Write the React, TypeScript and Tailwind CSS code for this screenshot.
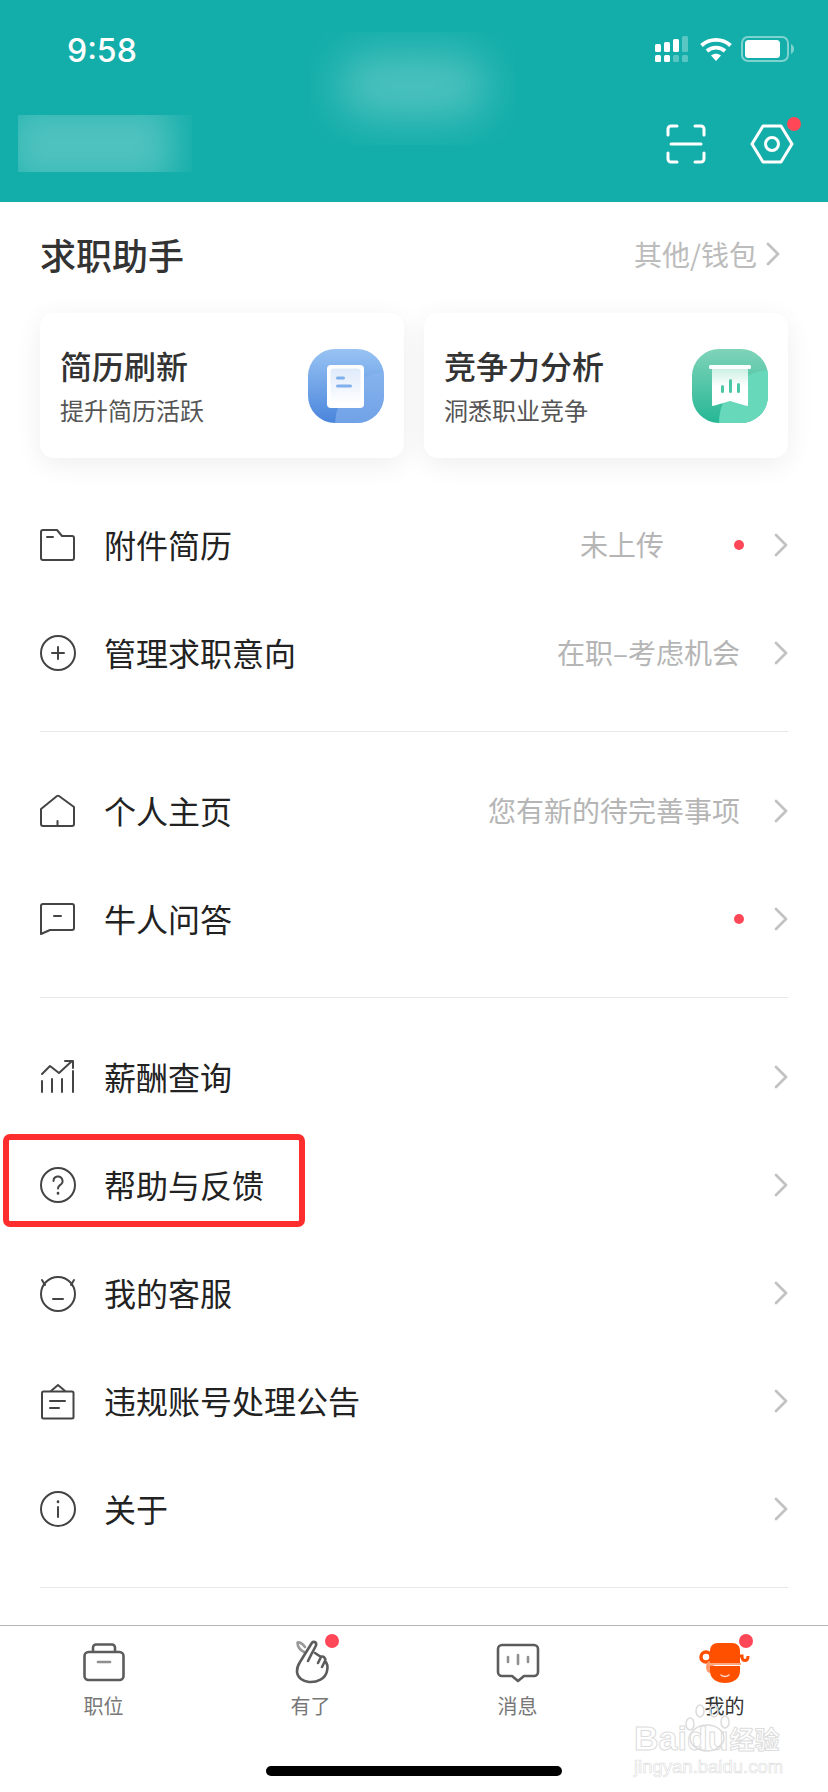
import type { ReactNode } from "react";

const STROKE = "#444444";

const Chevron = ({ color = "#c2c2c2" }: { color?: string }) => (
  <svg width="14" height="24" viewBox="0 0 14 24" fill="none">
    <path d="M2 2 L12 12 L2 22" stroke={color} strokeWidth="2.8" strokeLinecap="round" strokeLinejoin="round" />
  </svg>
);

const RowIcon = ({ children }: { children: ReactNode }) => (
  <svg width="38" height="38" viewBox="0 0 38 38" fill="none" stroke={STROKE} strokeWidth="2" strokeLinecap="round" strokeLinejoin="round">
    {children}
  </svg>
);

const icons: Record<string, ReactNode> = {
  folder: (
    <RowIcon>
      <path d="M1 6 a2 2 0 0 1 2 -2 H17 L22 10 H32 a2 2 0 0 1 2 2 V32 a2 2 0 0 1 -2 2 H3 a2 2 0 0 1 -2 -2 Z" />
      <path d="M7 11 H13" />
    </RowIcon>
  ),
  plus: (
    <RowIcon>
      <circle cx="18" cy="19" r="17" />
      <path d="M18 13 V25 M12 19 H24" />
    </RowIcon>
  ),
  home: (
    <RowIcon>
      <path d="M1 17 L17 4 a2 2 0 0 1 2 0 L34 15 V32 a2 2 0 0 1 -2 2 H3 a2 2 0 0 1 -2 -2 Z" />
      <path d="M17.5 29 V34" />
    </RowIcon>
  ),
  comment: (
    <RowIcon>
      <path d="M1 6 a2 2 0 0 1 2 -2 H32 a2 2 0 0 1 2 2 V28 a2 2 0 0 1 -2 2 H10 L1 34 Z" />
      <path d="M14 16 H21" />
    </RowIcon>
  ),
  chart: (
    <RowIcon>
      <path d="M2 34 V23 M12 34 V21 M22 34 V21 M33 34 V13" />
      <path d="M2 16 L10 8 L19 15 L32 3" />
      <path d="M25 3 H33 V10" />
    </RowIcon>
  ),
  help: (
    <RowIcon>
      <circle cx="18" cy="19" r="17" />
      <path d="M13.5 15 a4.5 4.5 0 1 1 6.8 3.8 c-1.5 1 -2.3 1.9 -2.3 3.6" />
      <path d="M18 27 V27.5" strokeWidth="2.6" />
    </RowIcon>
  ),
  service: (
    <RowIcon>
      <circle cx="18" cy="20" r="17" />
      <path d="M2 6 L5 11 M34 6 L31 11" />
      <path d="M13 25 H23" />
    </RowIcon>
  ),
  notice: (
    <RowIcon>
      <path d="M2 11 a1.5 1.5 0 0 1 1.5 -1.5 H32 a1.5 1.5 0 0 1 1.5 1.5 V35 a1.5 1.5 0 0 1 -1.5 1.5 H3.5 a1.5 1.5 0 0 1 -1.5 -1.5 Z" />
      <path d="M11 9 L18 3 L25 9" />
      <path d="M10 19 H25 M10 26 H19" />
    </RowIcon>
  ),
  info: (
    <RowIcon>
      <circle cx="18" cy="19" r="17" />
      <path d="M18 17 V27" />
      <path d="M18 11.5 V12" strokeWidth="2.6" />
    </RowIcon>
  ),
};

const groups = [
  {
    rows: [
      { icon: "folder", label: "附件简历", value: "未上传", dot: true },
      { icon: "plus", label: "管理求职意向", value: "在职–考虑机会" },
    ],
  },
  {
    rows: [
      { icon: "home", label: "个人主页", value: "您有新的待完善事项" },
      { icon: "comment", label: "牛人问答", dot: true },
    ],
  },
  {
    rows: [
      { icon: "chart", label: "薪酬查询" },
      { icon: "help", label: "帮助与反馈" },
      { icon: "service", label: "我的客服" },
      { icon: "notice", label: "违规账号处理公告" },
      { icon: "info", label: "关于" },
    ],
  },
];

const StatusIcons = () => (
  <div className="flex items-center">
    <svg width="33" height="26" viewBox="0 0 33 26" fill="#ffffff">
      <rect x="0" y="8" width="6" height="8" rx="1.5" />
      <rect x="9" y="6" width="6" height="10" rx="1.5" />
      <rect x="18" y="3" width="6" height="13" rx="1.5" />
      <rect x="27" y="0" width="6" height="16" rx="1.5" opacity="0.3" />
      <rect x="0" y="19" width="6" height="7" rx="1.5" />
      <rect x="9" y="19" width="6" height="7" rx="1.5" />
      <rect x="18" y="19" width="6" height="7" rx="1.5" opacity="0.3" />
      <rect x="27" y="19" width="6" height="7" rx="1.5" opacity="0.3" />
    </svg>
    <svg className="ml-[12px]" width="32" height="24" viewBox="0 0 32 24" fill="none" stroke="#ffffff" strokeWidth="3.8">
      <path d="M1.5 8.5 C9.5 1 22.5 1 30.5 8.5" />
      <path d="M7 14 C12 9.500 20 9.500 25 14" />
      <path d="M11 18.500 L16 24 L21 18.500 C18 16 14 16 11 18.500 Z" fill="#ffffff" stroke="none" />
    </svg>
    <svg className="ml-[9px]" width="53" height="26" viewBox="0 0 53 26" fill="none">
      <rect x="1" y="1" width="46" height="24" rx="6" stroke="#ffffff" strokeOpacity="0.45" strokeWidth="2" />
      <rect x="4" y="4" width="35" height="18" rx="3.5" fill="#ffffff" />
      <path d="M50 8 C52 9 53 11 53 13 C53 15 52 17 50 18 Z" fill="#ffffff" fillOpacity="0.45" />
    </svg>
  </div>
);

const HeaderActions = () => (
  <div className="flex h-[92px] items-center justify-end gap-[44px] pr-[34px]">
    <svg width="40" height="40" viewBox="0 0 40 40" fill="none" stroke="#ffffff" strokeWidth="3" strokeLinecap="round">
      <path d="M2 11 V5 a3 3 0 0 1 3 -3 H11 M29 2 H35 a3 3 0 0 1 3 3 V11" />
      <path d="M2 29 V35 a3 3 0 0 0 3 3 H11 M29 38 H35 a3 3 0 0 0 3 -3 V29" />
      <path d="M5 20 H35" />
    </svg>
    <div className="relative h-[40px] w-[44px]">
      <svg width="44" height="40" viewBox="0 0 44 40" fill="none" stroke="#ffffff" strokeWidth="3" strokeLinejoin="round">
        <path d="M13 2 H31 L42 20 L31 38 H13 L2 20 Z" />
        <circle cx="22" cy="20" r="6.5" />
      </svg>
      <span className="absolute right-[-7px] top-[-7px] h-[14px] w-[14px] rounded-full bg-[#ff4757]" />
    </div>
  </div>
);

const BlueBadge = () => (
  <svg width="76" height="74" viewBox="0 0 76 74">
    <defs>
      <linearGradient id="blueBg" x1="0" y1="0" x2="0" y2="1">
        <stop offset="0" stopColor="#98c3f3" />
        <stop offset="1" stopColor="#4a85dc" />
      </linearGradient>
      <linearGradient id="blueDoc" x1="0" y1="0" x2="0" y2="1">
        <stop offset="0" stopColor="#dfeafa" />
        <stop offset="1" stopColor="#ffffff" />
      </linearGradient>
      <clipPath id="blueClip">
        <rect width="76" height="74" rx="27" />
      </clipPath>
    </defs>
    <g clipPath="url(#blueClip)">
      <rect width="76" height="74" fill="url(#blueBg)" />
      <circle cx="80" cy="76" r="53" fill="#8ab6ee" opacity="0.6" />
    </g>
    <rect x="19" y="16" width="37" height="43" rx="4" fill="#ffffff" />
    <rect x="22.5" y="19.5" width="30" height="36" rx="3" fill="url(#blueDoc)" />
    <rect x="28" y="27.5" width="9" height="3" rx="1.5" fill="#7fb0ec" />
    <rect x="28" y="35.5" width="16" height="3" rx="1.5" fill="#7fb0ec" />
  </svg>
);

const GreenBadge = () => (
  <svg width="76" height="74" viewBox="0 0 76 74">
    <defs>
      <linearGradient id="greenBg" x1="0" y1="0" x2="0" y2="1">
        <stop offset="0" stopColor="#7fd3b8" />
        <stop offset="1" stopColor="#25b795" />
      </linearGradient>
      <linearGradient id="greenDoc" x1="0" y1="0" x2="0" y2="1">
        <stop offset="0" stopColor="#c5eee1" />
        <stop offset="0.5" stopColor="#ffffff" />
      </linearGradient>
      <clipPath id="greenClip">
        <rect width="76" height="74" rx="27" />
      </clipPath>
    </defs>
    <g clipPath="url(#greenClip)">
      <rect width="76" height="74" fill="url(#greenBg)" />
      <circle cx="80" cy="74" r="53" fill="#68d8bb" />
    </g>
    <path d="M20 18 H56 V56 a1 1 0 0 1 -1 1 L38 52 L21 57 a1 1 0 0 1 -1 -1 Z" fill="url(#greenDoc)" />
    <rect x="17" y="16" width="42" height="4" rx="1.5" fill="#ffffff" />
    <rect x="29" y="36" width="3" height="8" rx="1.5" fill="#4cc7a5" />
    <rect x="37" y="30" width="3" height="14" rx="1.5" fill="#4cc7a5" />
    <rect x="45" y="34" width="3" height="10" rx="1.5" fill="#4cc7a5" />
  </svg>
);

const Card = ({ title, sub, badge }: { title: string; sub: string; badge: ReactNode }) => (
  <div className="flex h-[145px] items-center justify-between rounded-[14px] bg-white pl-[20px] pr-[20px] shadow-[0_6px_28px_rgba(0,0,0,0.07)]">
    <div>
      <div className="text-[32px] font-medium leading-[40px] text-[#333333]">{title}</div>
      <div className="mt-[8px] text-[24px] leading-[34px] text-[#555555]">{sub}</div>
    </div>
    {badge}
  </div>
);

const Row = ({ icon, label, value, dot }: { icon: string; label: string; value?: string; dot?: boolean }) => (
  <div className="flex h-[108px] items-center">
    <div className="w-[64px]">{icons[icon]}</div>
    <div className="pb-[3px] text-[32px] leading-[40px] text-[#222222]">{label}</div>
    <div className="ml-auto flex items-center">
      {value && <span className="pb-[2px] text-[28px] text-[#b5b5b5]">{value}</span>}
      {dot && <span className={`h-[10px] w-[10px] rounded-full bg-[#ff4757] ${value ? "ml-[70px]" : ""}`} />}
      <div className={dot ? "ml-[30px]" : "ml-[34px]"}>
        <Chevron />
      </div>
    </div>
  </div>
);

const tabStroke = "#5c5c5c";

const tabs: { label: string; active?: boolean; dot?: boolean; icon: ReactNode }[] = [
  {
    label: "职位",
    icon: (
      <svg width="48" height="48" viewBox="0 0 48 48" fill="none" stroke={tabStroke} strokeWidth="2.6" strokeLinejoin="round">
        <rect x="4.5" y="14" width="39" height="28" rx="4" />
        <path d="M13 14 V9.5 a3 3 0 0 1 3 -3 H32 a3 3 0 0 1 3 3 V14" />
        <path d="M18 24 H30" stroke="#8f8f8f" strokeLinecap="round" />
      </svg>
    ),
  },
  {
    label: "有了",
    dot: true,
    icon: (
      <svg width="48" height="48" viewBox="0 0 48 48" fill="none" stroke={tabStroke} strokeWidth="2.6" strokeLinecap="round" strokeLinejoin="round">
        <path d="M17 14 C13 12 10.500 8 10.500 4.500 C12.500 4 16 6.500 18 9" stroke="#999999" />
        <path d="M13 24 L24.500 5.500 C26 2.500 30 4 29 7.500 L24 17 M24 17 L21 23 M28 15 L34 19 L31 25 M34 19 C36 17.500 39 20 38 23 L35 29 M38 23 C40 25 41 29 40 33 C38.500 41 30 44.500 22 44 C16 43.500 10.500 40 10 34 C9.800 30.500 11 27 13 24" />
      </svg>
    ),
  },
  {
    label: "消息",
    icon: (
      <svg width="48" height="48" viewBox="0 0 48 48" fill="none" stroke={tabStroke} strokeWidth="2.6" strokeLinecap="round" strokeLinejoin="round">
        <path d="M8 7 H40 a4 4 0 0 1 4 4 V34 a4 4 0 0 1 -4 4 H30 L24 43 L18 38 H8 a4 4 0 0 1 -4 -4 V11 a4 4 0 0 1 4 -4 Z" />
        <path d="M14 19 V24 M24 17 V26 M34 19 V24" stroke="#8f8f8f" />
      </svg>
    ),
  },
  {
    label: "我的",
    active: true,
    dot: true,
    icon: (
      <svg width="54" height="48" viewBox="0 0 54 48">
        <circle cx="8" cy="19" r="5" fill="none" stroke="#ff5000" strokeWidth="3.500" />
        <path d="M12 19 H15" stroke="#ff5000" strokeWidth="3" />
        <path d="M40 18 H44 C44 24 50 24 50 18" fill="none" stroke="#ff5000" strokeWidth="3" />
        <ellipse cx="12" cy="29" rx="4" ry="6" fill="#ff9b6e" />
        <path d="M12 28 H42 V33 C42 41 35 45 27 45 C19 45 12 41 12 33 Z" fill="#ff5000" />
        <path d="M12 25 V13 C12 8 15 5 20 5 H34 C39 5 42 8 42 13 V25 Z" fill="#ff5000" />
        <path d="M11 26 H43" stroke="#ffa77f" strokeWidth="2" />
        <path d="M23 37 C25 39 29 39 31 37" fill="none" stroke="#ffd9c7" strokeWidth="1.500" strokeLinecap="round" />
      </svg>
    ),
  },
];

export default function App() {
  return (
    <div className="relative h-[1792px] w-[828px] overflow-hidden bg-white font-['Noto_Sans_CJK_SC','Noto_Sans',sans-serif]">
      {/* Header */}
      <div className="relative h-[202px] overflow-hidden bg-[#14aeaa]">
        <div className="absolute left-[310px] top-[32px] h-[113px] w-[205px] overflow-hidden">
          <div className="mx-auto mt-[22px] h-[64px] w-[150px] rounded-full bg-white/25 blur-[22px]" />
        </div>
        <div className="absolute left-[18px] top-[115px] h-[57px] w-[174px] overflow-hidden">
          <div className="ml-[-10px] mt-[-10px] h-[80px] w-[165px] bg-white/25 blur-[18px]" />
        </div>
        <div className="relative flex h-[98px] items-center justify-between pl-[67px] pr-[34px]">
          <span className="pt-[3px] font-['Inter',sans-serif] text-[32px] font-medium text-white">9:58</span>
          <StatusIcons />
        </div>
        <div className="relative">
          <HeaderActions />
        </div>
      </div>

      {/* Job helper */}
      <div className="flex h-[111px] items-center justify-between pb-[8px] pl-[40px] pr-[48px]">
        <span className="text-[36px] font-medium leading-[44px] text-[#333333]">求职助手</span>
        <div className="flex items-center gap-[9px]">
          <span className="text-[28px] text-[#bcbcbc]">其他/钱包</span>
          <Chevron />
        </div>
      </div>
      <div className="grid grid-cols-2 gap-[20px] px-[40px]">
        <Card title="简历刷新" sub="提升简历活跃" badge={<BlueBadge />} />
        <Card title="竞争力分析" sub="洞悉职业竞争" badge={<GreenBadge />} />
      </div>

      {/* Menu */}
      <div className="mt-[33px] px-[40px]">
        {groups.map((group, i) => (
          <div key={i} className="mb-[25px] border-b border-[#e8e8e8] pb-[24px]">
            {group.rows.map((row) => (
              <Row key={row.label} {...row} />
            ))}
          </div>
        ))}
      </div>

      {/* Annotation around the help row */}
      <div className="absolute left-[3px] top-[1134px] h-[93px] w-[302px] rounded-[7px] border-[6px] border-[#ff2e2e]" />

      {/* Tab bar */}
      <div className="absolute bottom-0 left-0 w-full border-t border-[#b5b5b5] bg-white">
        <div className="grid grid-cols-4 pt-[12px]">
          {tabs.map((tab) => (
            <div key={tab.label} className="flex flex-col items-center">
              <div className="relative flex h-[48px] w-[54px] items-center justify-center">
                {tab.icon}
                {tab.dot && <span className="absolute right-[-1px] top-[-4px] h-[14px] w-[14px] rounded-full bg-[#ff4757]" />}
              </div>
              <span className={`mt-[6px] text-[20px] leading-[28px] ${tab.active ? "text-[#333333]" : "text-[#777777]"}`}>{tab.label}</span>
            </div>
          ))}
        </div>
        <div className="mx-auto mb-[16px] mt-[46px] h-[10px] w-[296px] rounded-full bg-black" />
      </div>

      {/* Watermark */}
      <div className="pointer-events-none absolute left-[634px] top-[1700px] w-[150px]">
        <svg className="absolute left-[46px] top-[2px]" width="56" height="50" viewBox="0 0 56 50" fill="none" stroke="#dcdcdc" strokeWidth="1.500">
          <ellipse cx="10" cy="22" rx="4" ry="6" />
          <ellipse cx="20" cy="9" rx="4" ry="6" />
          <ellipse cx="34" cy="9" rx="4" ry="6" />
          <ellipse cx="45" cy="20" rx="4" ry="6" />
          <ellipse cx="27" cy="36" rx="17" ry="13" />
        </svg>
        <div className="mt-[23px] flex h-[30px] items-center whitespace-nowrap font-['Liberation_Sans',sans-serif] text-[34px] font-bold leading-[30px] text-transparent [-webkit-text-stroke:1px_#dcdcdc]">
          Baidu<span className="ml-[1px] font-['Noto_Sans_CJK_SC',sans-serif] text-[25px]">经验</span>
        </div>
        <div className="mt-[4px] whitespace-nowrap font-['Liberation_Sans',sans-serif] text-[18.5px] leading-[20px] text-transparent [-webkit-text-stroke:0.6px_#dcdcdc]">
          jingyan.baidu.com
        </div>
      </div>
    </div>
  );
}
